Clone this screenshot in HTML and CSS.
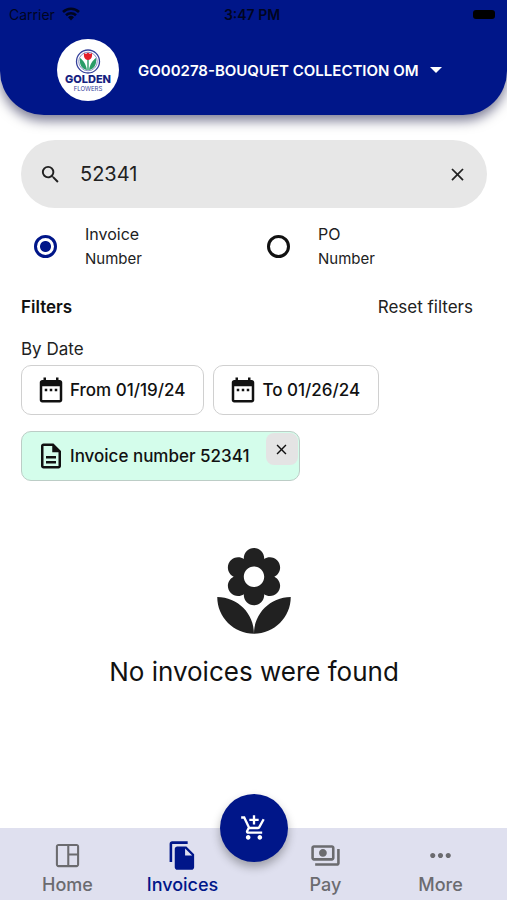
FILE: index.html
```html
<!DOCTYPE html>
<html lang="en">
<head>
  <meta charset="UTF-8" />
  <meta name="viewport" content="width=device-width, initial-scale=1" />
  <title>Golden Flowers - Invoices</title>
  <link rel="stylesheet" href="styles.css">
</head>
<body>

  <header class="header">
    <div class="status">
      <span class="carrier">Carrier
        <svg class="wifi" viewBox="0 0 18 14" aria-hidden="true"><path d="M1 5a11.500 11.500 0 0 1 16 0M4 8.200a7.200 7.200 0 0 1 10 0" fill="none" stroke="currentColor" stroke-width="2.600"/><path d="M9 13.500l-3-3.200a4.300 4.300 0 0 1 6 0z"/></svg>
      </span>
      <span class="time">3:47 PM</span>
      <span class="battery"></span>
    </div>
    <div class="account">
      <svg class="logo" viewBox="0 0 62 62" role="img" aria-label="Golden Flowers">
        <circle cx="31" cy="31" r="31" fill="#fff"/>
        <g transform="translate(0 -1)">
          <circle cx="31" cy="23.500" r="11.500" fill="#fff" stroke="#35409b" stroke-width="1.300"/>
          <circle cx="31" cy="23.500" r="9.300" fill="none" stroke="#5b64af" stroke-width="0.700"/>
          <path d="M30 32c-5-1-8-5-7-12 3 2 6 6 7 12zM32 32c5-1 8-5 7-12-3 2-6 6-7 12z" fill="#2a9c67"/>
          <path d="M30.300 20h1.400v12h-1.400z" fill="#2a9c67"/>
          <path d="M27 15l2 1 2-1.500 2 1.500 2-1c.6 4-1 7-4 7s-4.600-3-4-7z" fill="#e5202b"/>
        </g>
        <text class="logo-name" x="31" y="44" text-anchor="middle">GOLDEN</text>
        <text class="logo-sub" x="31" y="52" text-anchor="middle">FLOWERS</text>
      </svg>
      <div class="account-pick">
        <select class="account-select" aria-label="Account">
          <option>GO00278-BOUQUET COLLECTION OM</option>
        </select>
        <svg class="caret" viewBox="0 0 14 7" aria-hidden="true"><path d="M0 0h14L7 7z"/></svg>
      </div>
    </div>
  </header>

  <main class="content">
    <form class="search-form">
      <div class="search">
        <svg class="search-icon" viewBox="0 0 24 24" aria-hidden="true"><path d="M15.500 14h-.79l-.28-.27A6.470 6.470 0 0 0 16 9.500 6.500 6.500 0 1 0 9.500 16c1.610 0 3.090-.59 4.230-1.570l.27.28v.79l5 4.990L20.490 19l-4.990-5zm-6 0C7.010 14 5 11.990 5 9.500S7.010 5 9.500 5 14 7.010 14 9.500 11.990 14 9.500 14z"/></svg>
        <input class="search-input" type="text" value="52341" aria-label="Search invoices">
        <button class="clear" type="button" aria-label="Clear search">
          <svg viewBox="0 0 24 24"><path d="M19 6.410L17.590 5 12 10.590 6.410 5 5 6.410 10.590 12 5 17.590 6.410 19 12 13.410 17.590 19 19 17.590 13.410 12z"/></svg>
        </button>
      </div>
      <div class="search-by">
        <label class="choice">
          <input type="radio" name="by" value="invoice" checked>
          <span>Invoice<br><small>Number</small></span>
        </label>
        <label class="choice">
          <input type="radio" name="by" value="po">
          <span>PO<br><small>Number</small></span>
        </label>
      </div>
    </form>

    <section class="filters">
      <div class="filters-head">
        <h2>Filters</h2>
        <button class="reset" type="button">Reset filters</button>
      </div>
      <p class="filters-label">By Date</p>
      <div class="chips">
        <button class="chip" type="button">
          <svg viewBox="0 0 24 24" aria-hidden="true"><path d="M9 11H7v2h2v-2zm4 0h-2v2h2v-2zm4 0h-2v2h2v-2zm2-7h-1V2h-2v2H8V2H6v2H5c-1.110 0-1.990.9-1.990 2L3 20c0 1.100.89 2 2 2h14c1.100 0 2-.9 2-2V6c0-1.100-.9-2-2-2zm0 16H5V9h14v11z"/></svg>
          From 01/19/24
        </button>
        <button class="chip" type="button">
          <svg viewBox="0 0 24 24" aria-hidden="true"><path d="M9 11H7v2h2v-2zm4 0h-2v2h2v-2zm4 0h-2v2h2v-2zm2-7h-1V2h-2v2H8V2H6v2H5c-1.110 0-1.990.9-1.990 2L3 20c0 1.100.89 2 2 2h14c1.100 0 2-.9 2-2V6c0-1.100-.9-2-2-2zm0 16H5V9h14v11z"/></svg>
          To 01/26/24
        </button>
        <div class="chip chip-active">
          <svg viewBox="0 0 24 24" aria-hidden="true"><path d="M8 16h8v2H8zm0-4h8v2H8zm6-10H6c-1.100 0-2 .9-2 2v16c0 1.100.89 2 1.990 2H18c1.100 0 2-.9 2-2V8l-6-6zm4 18H6V4h7v5h5v11z"/></svg>
          Invoice number 52341
          <button class="chip-close" type="button" aria-label="Remove filter">
            <svg viewBox="0 0 24 24"><path d="M19 6.410L17.590 5 12 10.590 6.410 5 5 6.410 10.590 12 5 17.590 6.410 19 12 13.410 17.590 19 19 17.590 13.410 12z"/></svg>
          </button>
        </div>
      </div>
    </section>

    <section class="empty">
      <svg viewBox="0 0 24 24" aria-hidden="true"><path d="M12 22c4.970 0 9-4.030 9-9-4.970 0-9 4.030-9 9zM5.600 10.250c0 1.380 1.120 2.500 2.500 2.500.53 0 1.010-.16 1.420-.44l-.02.19c0 1.380 1.120 2.500 2.500 2.500s2.500-1.120 2.500-2.500l-.02-.19c.4.28.89.44 1.420.44 1.380 0 2.500-1.120 2.500-2.500 0-1-.59-1.850-1.430-2.250.84-.4 1.430-1.250 1.430-2.250 0-1.380-1.120-2.500-2.500-2.500-.53 0-1.010.16-1.420.44l.02-.19C14.500 2.120 13.380 1 12 1S9.500 2.120 9.500 3.500l.02.19c-.4-.28-.89-.44-1.420-.44-1.380 0-2.500 1.120-2.500 2.500 0 1 .59 1.850 1.430 2.250-.84.4-1.430 1.250-1.430 2.250zM12 5.500c1.380 0 2.500 1.120 2.500 2.500s-1.120 2.500-2.500 2.500S9.500 9.380 9.500 8s1.120-2.500 2.500-2.500zM3 13c0 4.970 4.030 9 9 9 0-4.970-4.030-9-9-9z"/></svg>
      <p>No invoices were found</p>
    </section>
  </main>

  <nav class="tabs">
    <a class="tab" href="#home">
      <svg viewBox="0 0 24 24" aria-hidden="true"><path d="M5 3h14c1.100 0 2 .9 2 2v14c0 1.100-.9 2-2 2H5c-1.100 0-2-.9-2-2V5c0-1.100.9-2 2-2zm-.4 1.600v14.800h7.200V4.600zm8.800 0v5.800h6V4.600zm0 7.400v7.400h6V12z" fill-rule="evenodd"/></svg>
      Home
    </a>
    <a class="tab active" href="#invoices">
      <svg viewBox="0 0 24 24" aria-hidden="true"><path d="M16 1H4c-1.100 0-2 .9-2 2v14h2V3h12V1zm-1 4l6 6v10c0 1.100-.9 2-2 2H7.990C6.890 23 6 22.100 6 21l.01-14c0-1.100.89-2 1.990-2h7zm-1 7h5.500L14 6.500V12z"/></svg>
      Invoices
    </a>
    <a class="tab tab-right" href="#pay">
      <svg viewBox="0 0 24 24" aria-hidden="true"><path d="M19 14V6c0-1.100-.9-2-2-2H3c-1.100 0-2 .9-2 2v8c0 1.100.9 2 2 2h14c1.100 0 2-.9 2-2zm-2 0H3V6h14v8zm-7-7c-1.660 0-3 1.340-3 3s1.340 3 3 3 3-1.340 3-3-1.340-3-3-3zm13 0v11c0 1.100-.9 2-2 2H4v-2h17V7h2z"/></svg>
      Pay
    </a>
    <a class="tab" href="#more">
      <svg viewBox="0 0 24 24" aria-hidden="true"><path d="M6 10c-1.100 0-2 .9-2 2s.9 2 2 2 2-.9 2-2-.9-2-2-2zm12 0c-1.100 0-2 .9-2 2s.9 2 2 2 2-.9 2-2-.9-2-2-2zm-6 0c-1.100 0-2 .9-2 2s.9 2 2 2 2-.9 2-2-.9-2-2-2z"/></svg>
      More
    </a>
    <button class="cart" type="button" aria-label="New order">
      <svg viewBox="0 0 24 24"><path d="M11 9h2V6h3V4h-3V1h-2v3H8v2h3v3zm-4 9c-1.100 0-1.990.9-1.990 2S5.900 22 7 22s2-.9 2-2-.9-2-2-2zm10 0c-1.100 0-1.990.9-1.990 2s.89 2 1.990 2 2-.9 2-2-.9-2-2-2zm-9.830-3.250l.03-.12.9-1.630h7.450c.75 0 1.410-.41 1.750-1.030l3.860-7.010L19.420 4h-.01l-1.100 2-2.760 5H8.530l-.13-.27L6.160 6l-.95-2-.94-2H1v2h2l3.600 7.590-1.350 2.450c-.16.28-.25.61-.25.96 0 1.100.9 2 2 2h12v-2H7.420c-.13 0-.25-.11-.25-.25z"/></svg>
    </button>
  </nav>

</body>
</html>
```

FILE: styles.css
```css
* { box-sizing: border-box; }
body {
  margin: 0;
  min-height: 100vh;
  display: flex;
  flex-direction: column;
  font-family: Inter, "Liberation Sans", sans-serif;
  font-size: 17px;
  color: #212121;
  background: #fff;
}
button, input, select {
  font: inherit;
  color: inherit;
  border: none;
  background: none;
  padding: 0;
  margin: 0;
}
button { cursor: pointer; }
svg { display: block; flex: none; fill: currentColor; }
p, h2 { margin: 0; }

/* header */
.header {
  background: #001689;
  border-radius: 0 0 44px 44px;
  box-shadow: 0 6px 12px rgba(0,0,50,0.5);
  padding-bottom: 14px;
}
.status {
  display: grid;
  grid-template-columns: 1fr auto 1fr;
  align-items: center;
  height: 28px;
  padding: 0 12px 0 9px;
  font-size: 14px;
  color: #00051f;
}
.carrier { display: flex; align-items: center; gap: 7px; }
.wifi { width: 18px; height: 14px; }
.time { font-weight: 600; }
.battery {
  justify-self: end;
  width: 22px;
  height: 9px;
  border-radius: 3px;
  background: #000;
}
.account {
  display: flex;
  align-items: center;
  justify-content: center;
  gap: 19px;
  padding: 11px 8px 0 0;
}
.logo { width: 62px; height: 62px; }
.logo-name { font-size: 11px; font-weight: 800; fill: #15217f; }
.logo-sub { font-size: 6px; fill: #35409b; }
.account-pick { display: flex; align-items: center; gap: 11px; color: #fff; }
.account-select {
  appearance: none;
  font-size: 15px;
  font-weight: 600;
}
.account-select option { color: #212121; }
.caret { width: 12px; height: 6px; pointer-events: none; }

.content { flex: 1; padding: 25px 20px 24px 21px; }

/* search */
.search {
  display: flex;
  align-items: center;
  height: 68px;
  padding: 0 19px 0 18px;
  border-radius: 34px;
  background: #e7e7e7;
}
.search-icon { width: 23px; height: 23px; }
.search-input {
  flex: 1;
  min-width: 0;
  margin-left: 18px;
  font-size: 20px;
  outline: none;
}
.clear svg { width: 21px; height: 21px; }
.search-by {
  display: grid;
  grid-template-columns: 1fr 1fr;
  margin-top: 14px;
}
.choice {
  display: flex;
  align-items: center;
  gap: 28px;
  padding-left: 13px;
  font-size: 16px;
  line-height: 24px;
}
.choice small { font-size: 15px; }
.choice input {
  appearance: none;
  width: 23px;
  height: 23px;
  border: 3px solid #111;
  border-radius: 50%;
}
.choice input:checked {
  border-color: #001689;
  background: radial-gradient(circle, #001689 5px, transparent 6px);
}

/* filters */
.filters { margin-top: 23px; }
.filters-head {
  display: flex;
  justify-content: space-between;
  align-items: center;
  height: 26px;
  padding-right: 14px;
}
.filters-head h2 { font-size: 17px; font-weight: 600; color: #111; }
.filters-label { margin-top: 16px; line-height: 26px; }
.chips {
  display: flex;
  flex-wrap: wrap;
  gap: 16px 9px;
  margin-top: 3px;
}
.chip {
  position: relative;
  display: flex;
  align-items: center;
  gap: 4px;
  height: 50px;
  padding: 0 18px 0 14px;
  border: 1px solid #d0d0d0;
  border-radius: 10px;
  font-weight: 500;
  color: #111;
}
.chip > svg { width: 30px; height: 30px; }
.chip-active {
  padding-right: 49px;
  background: #d4fdeb;
  border-color: #bccdc6;
}
.chip-close {
  position: absolute;
  top: 1px;
  right: 1px;
  display: grid;
  place-items: center;
  width: 32px;
  height: 32px;
  border-radius: 8px;
  background: #e4e4e4;
}
.chip-close svg { width: 17px; height: 17px; }

/* empty list */
.empty {
  display: flex;
  flex-direction: column;
  align-items: center;
  margin-top: 63px;
}
.empty svg { width: 98px; height: 98px; }
.empty p { margin-top: 12px; font-size: 26px; line-height: 36px; color: #111; }

/* bottom tabs */
.tabs {
  position: sticky;
  bottom: 0;
  display: grid;
  grid-template-columns: 1fr 1fr 28px 1fr 1fr;
  height: 72px;
  padding: 12px 9px 0 10px;
  background: #dfe0ef;
}
.tab {
  display: flex;
  flex-direction: column;
  align-items: center;
  gap: 2px;
  font-size: 18px;
  font-weight: 500;
  line-height: 24px;
  color: #6b6b6f;
  text-decoration: none;
}
.tab-right { grid-column: 4; }
.tab svg { width: 31px; height: 31px; }
.tab.active { color: #001689; }
.cart {
  position: absolute;
  top: -34px;
  left: calc(50% - 34px);
  display: grid;
  place-items: center;
  width: 68px;
  height: 68px;
  border-radius: 50%;
  background: #001689;
  color: #fff;
  box-shadow: 0 5px 10px rgba(0,0,0,0.3);
}
.cart svg { width: 28px; height: 28px; }
```
